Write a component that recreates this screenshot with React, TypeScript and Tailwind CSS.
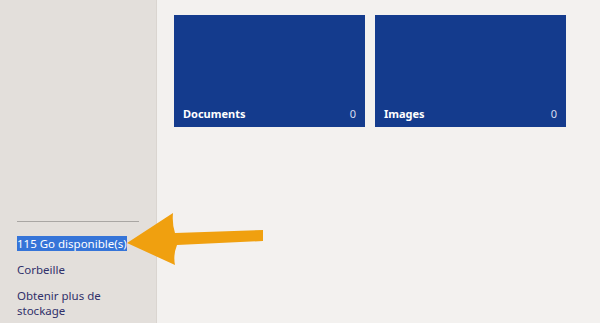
import React from 'react';

const font = { fontFamily: '"Noto Sans", "Open Sans", sans-serif' };

const Tile: React.FC<{ label: string; count: number }> = ({ label, count }) => (
  <div className="w-[191px] h-[112px] bg-[#143b8d] flex items-end justify-between px-[9px] pb-[6px]">
    <span className="text-white text-[11px] font-bold leading-[14px]">{label}</span>
    <span className="text-[#d8def0] text-[11px] leading-[14px]">{count}</span>
  </div>
);

export default function App() {
  return (
    <div className="relative flex w-[600px] h-[323px] overflow-hidden bg-[#f3f1ef]" style={font}>
      {/* Left pane */}
      <aside className="w-[157px] shrink-0 bg-[#e3dfdb] border-r border-[#dad5d0] pl-[17px] pr-[17px] pt-[221px] text-[#30306a] text-[11.5px]">
        <div className="h-px bg-[#a9a6a3] w-[122px]" />
        <div className="mt-[15px] leading-[13px]">
          <span className="bg-[#3574d8] text-white">115 Go disponible(s)</span>
        </div>
        <div className="mt-[12px] leading-[16px]">Corbeille</div>
        <div className="mt-[10px] leading-[15px]">
          Obtenir plus de
          <br />
          stockage
        </div>
      </aside>

      {/* Main */}
      <main className="flex-1 pl-[17px] pt-[15px]">
        <div className="flex gap-[10px]">
          <Tile label="Documents" count={0} />
          <Tile label="Images" count={0} />
        </div>
      </main>

      {/* Annotation arrow */}
      <svg className="absolute left-0 top-0 pointer-events-none" width="600" height="323" viewBox="0 0 600 323">
        <path
          d="M127 243 L173 213 Q172 224 175 233 L263 230 L263 241 L177 245 Q173 255 175 265 Z"
          fill="#f0a00f"
        />
      </svg>
    </div>
  );
}
